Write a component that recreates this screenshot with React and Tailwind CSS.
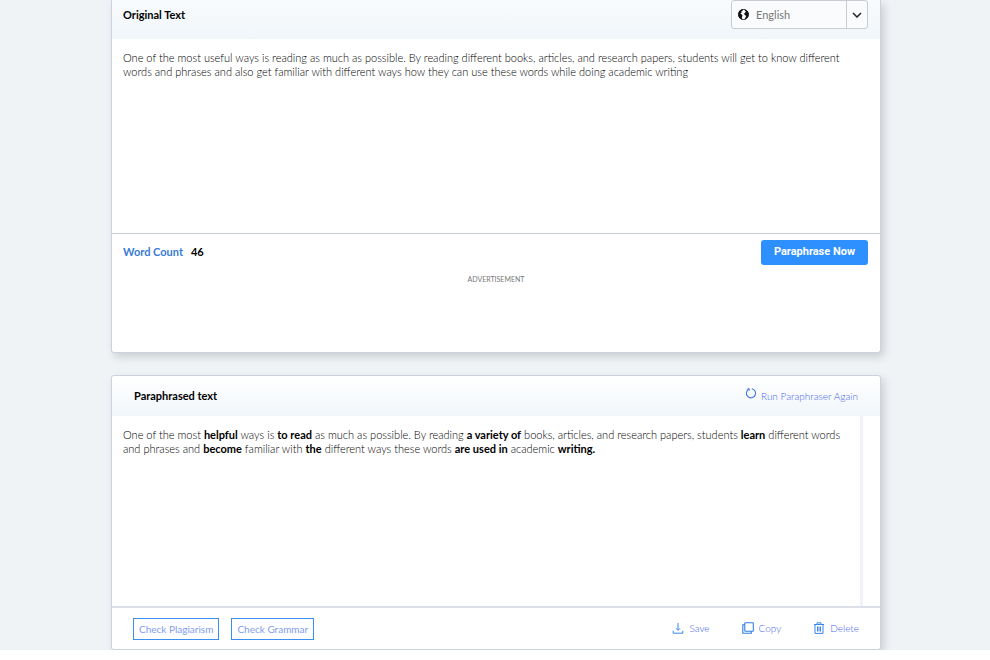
import React from "react";

function GlobeIcon() {
  return (
    <svg viewBox="0 0 12 12" className="pointer-events-none absolute left-[7px] top-[9px] size-[11px]" aria-hidden="true">
      <circle cx="6" cy="6" r="5.500" fill="#fff" stroke="#111" />
      <path d="M5.300.3 5 1.800 3.600 2.700 3.900 4 2.500 5.200l1.700.8.8 1.400-.8 1.500.2 2.500A5.600 5.600 0 0 1 .4 6 5.600 5.600 0 0 1 5.300.3Z" fill="#111" />
      <path d="M7.400.5 9.800 1.600 11.500 5l-.3 3-2.600 3-.9.400.2-1.800.9-1.400-.6-1.400-1.200-.5-.2-1.400.9-1.200.8-.3-.2-1.300-.7-.4Z" fill="#111" />
    </svg>
  );
}

function ChevronIcon() {
  return (
    <svg viewBox="0 0 10 6" className="pointer-events-none absolute right-[6px] top-[12px] h-[6px] w-[10px]" fill="none" stroke="#222" strokeWidth="1.500" aria-hidden="true">
      <path d="m1 1 4 4 4-4" />
    </svg>
  );
}

function RerunIcon() {
  return (
    <svg viewBox="0 0 12 13" className="mb-[6px] h-[13px] w-[12px]" fill="none" stroke="#3f74e8" strokeWidth="1.100" aria-hidden="true">
      <path d="M6.800 1.700a4.600 4.600 0 1 1-2.800.4" />
      <path d="M2.400 1.800h1.900v1.900" strokeWidth=".9" />
    </svg>
  );
}

function SaveIcon() {
  return (
    <svg viewBox="0 0 12 12" className="size-[12px]" fill="none" stroke="#3b86e8" aria-hidden="true">
      <path d="M6 1v7M4 6.300 6 8.300l2-2M1.200 8.800v2.400h9.600V8.800" />
    </svg>
  );
}

function CopyIcon() {
  return (
    <svg viewBox="0 0 12 12" className="size-[12px]" fill="none" stroke="#2f7fe6" strokeWidth="1.100" aria-hidden="true">
      <rect x="2.800" y=".8" width="8.500" height="8.500" rx=".5" />
      <path d="M2.800 2.800H.8v8.500h8.500v-2" />
    </svg>
  );
}

function DeleteIcon() {
  return (
    <svg viewBox="0 0 12 12" className="size-[12px]" fill="none" stroke="#3b86e8" aria-hidden="true">
      <path d="M1 2.500h10M4 2.300V.8h4v1.500M2 2.500v8.900h8V2.500M4.500 4.500v5M6 4.500v5M7.500 4.500v5" />
    </svg>
  );
}

function Action({ icon, children }) {
  return (
    <button type="button" className="flex items-center gap-[5px]">
      {icon}
      {children}
    </button>
  );
}

const outline = "h-[22px] border border-[#3a8ef0] px-[5px] text-[10px] font-normal leading-[18px] text-[#7f9cf0]";

export default function App() {
  return (
    <div className="bg-white pb-[10px] font-['Lato',sans-serif] text-[11px] font-light leading-[14px] text-black">
      <main className="flex flex-col gap-[22px] overflow-hidden bg-[#eff3f6] pl-[111px] pr-[109px]">
        <section className="rounded-b-[3px] border border-t-0 border-[#ccd2de] bg-white shadow-[3px_4px_8px_rgba(0,0,0,0.15)]">
          <header className="flex h-[39px] items-start justify-between bg-linear-to-b from-[#f8fbfd] to-[#f1f6fa] pl-[11px] pr-3">
            <label htmlFor="original" className="pt-2 font-bold text-black">Original Text</label>
            <div className="relative">
              <select aria-label="Language" className="block h-[29px] w-[137px] appearance-none rounded-[3px] border border-[#c8ccd2] bg-[#f9fbfc] pl-6 font-normal text-[#777]">
                <option>English</option>
              </select>
              <GlobeIcon />
              <span className="pointer-events-none absolute bottom-0 right-[21px] top-0 w-px bg-[#c8ccd2]" />
              <ChevronIcon />
            </div>
          </header>
          <textarea
            id="original"
            className="block h-[194px] w-full resize-none px-[11px] pt-3 outline-none"
            defaultValue="One of the most useful ways is reading as much as possible. By reading different books, articles, and research papers, students will get to know different words and phrases and also get familiar with different ways how they can use these words while doing academic writing"
          />
          <div className="flex h-[37px] items-center border-t border-[#c5cad3] pl-[11px] pr-3">
            <span className="font-bold text-[#3a7bd5]">Word Count</span>
            <span className="ml-2 font-bold text-black">46</span>
            <button type="button" className="ml-auto h-[25px] rounded-[3px] bg-[#2e90ff] px-[13px] font-['Roboto',Arial,sans-serif] font-bold text-white">Paraphrase Now</button>
          </div>
          <div className="h-[82px] pt-[2px] text-center text-[7px] font-normal text-[#777]">ADVERTISEMENT</div>
        </section>

        <section className="rounded-[3px] border border-[#ccd2de] bg-white shadow-[3px_4px_8px_rgba(0,0,0,0.15)]">
          <header className="flex h-10 items-center justify-between rounded-t-[3px] bg-linear-to-b from-white to-[#f1f6fa] px-[22px]">
            <h2 className="font-bold text-black">Paraphrased text</h2>
            <button type="button" className="flex items-center gap-1 text-[10px] text-[#4a68ec]">
              <RerunIcon />
              Run Paraphraser Again
            </button>
          </header>
          <div className="mr-[17px] h-[190px] border-r-[3px] border-[#f0f2f8] pl-[11px] pr-2 pt-3">
            <p className="[&_b]:font-bold [&_b]:text-black">
              One of the most <b>helpful</b> ways is <b>to read</b> as much as possible. By reading <b>a variety of</b> books, articles, and research papers, students <b>learn</b> different words and phrases and <b>become</b> familiar with <b>the</b> different ways these words <b>are used in</b> academic <b>writing.</b>
            </p>
          </div>
          <footer className="flex h-[43px] items-center justify-between border-t-2 border-[#dcdfea] px-[21px]">
            <div className="flex gap-3">
              <button type="button" className={outline}>Check Plagiarism</button>
              <button type="button" className={outline}>Check Grammar</button>
            </div>
            <div className="flex gap-8 pb-[2px] text-[10px] text-[#4a68ec]">
              <Action icon={<SaveIcon />}>Save</Action>
              <Action icon={<CopyIcon />}>Copy</Action>
              <Action icon={<DeleteIcon />}>Delete</Action>
            </div>
          </footer>
        </section>
      </main>
    </div>
  );
}
